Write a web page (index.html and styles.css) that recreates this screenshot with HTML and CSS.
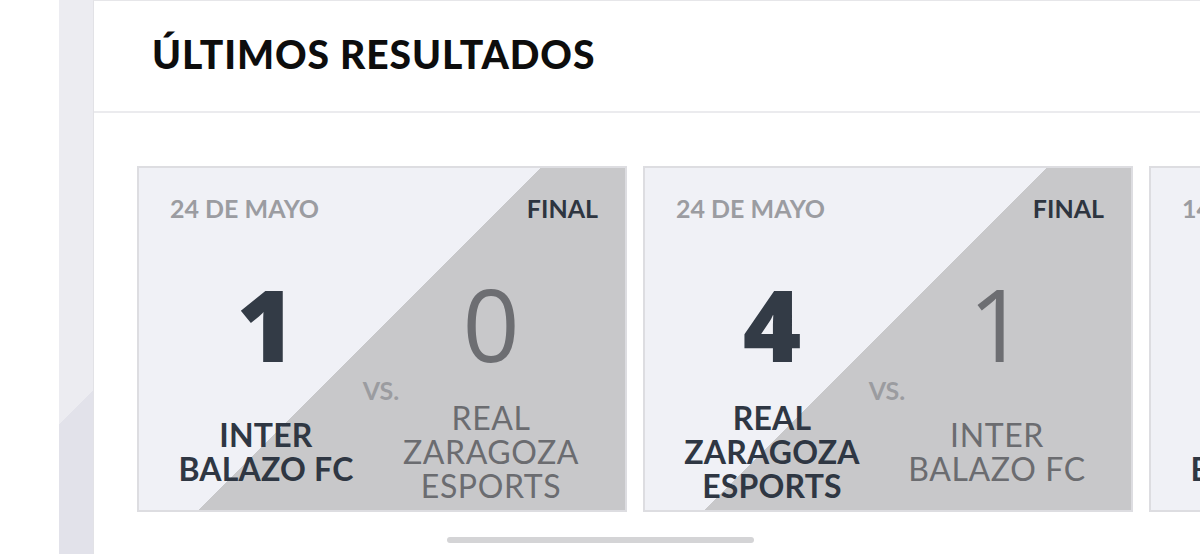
FILE: index.html
```html
<!DOCTYPE html>
<html lang="es">
<head>
<meta charset="utf-8">
<title>Últimos resultados</title>
<link rel="stylesheet" href="styles.css">
</head>
<body>
<div class="page">
  <div class="rail"></div>
  <section class="panel">
    <header class="panel-head">
      <h2 class="panel-title">ÚLTIMOS RESULTADOS</h2>
    </header>
    <div class="results">
      <article class="card">
        <div class="card-top">
          <span class="date">24 DE MAYO</span>
          <span class="status">FINAL</span>
        </div>
        <div class="match">
          <div class="side win">
            <div class="score">1</div>
            <div class="team"><span>INTER<br>BALAZO FC</span></div>
          </div>
          <div class="vs">VS.</div>
          <div class="side lose">
            <div class="score">0</div>
            <div class="team"><span>REAL<br>ZARAGOZA<br>ESPORTS</span></div>
          </div>
        </div>
      </article>
      <article class="card">
        <div class="card-top">
          <span class="date">24 DE MAYO</span>
          <span class="status">FINAL</span>
        </div>
        <div class="match">
          <div class="side win">
            <div class="score">4</div>
            <div class="team"><span>REAL<br>ZARAGOZA<br>ESPORTS</span></div>
          </div>
          <div class="vs">VS.</div>
          <div class="side lose">
            <div class="score">1</div>
            <div class="team"><span>INTER<br>BALAZO FC</span></div>
          </div>
        </div>
      </article>
      <article class="card">
        <div class="card-top">
          <span class="date">14 DE MAYO</span>
          <span class="status">FINAL</span>
        </div>
        <div class="match">
          <div class="side win">
            <div class="score">2</div>
            <div class="team"><span>INTER<br>BALAZO FC</span></div>
          </div>
          <div class="vs">VS.</div>
          <div class="side lose">
            <div class="score">1</div>
            <div class="team"><span>REAL<br>ZARAGOZA<br>ESPORTS</span></div>
          </div>
        </div>
      </article>
    </div>
    <div class="scroll-thumb"></div>
  </section>
</div>
</body>
</html>
```

FILE: styles.css
```css
html, body {
  margin: 0;
  height: 100%;
  background: #fff;
  overflow: hidden;
}

body {
  font-family: Lato, "Open Sans", sans-serif;
}

.page {
  display: flex;
  height: 554px;
}

/* edge of the neighbouring column */
.rail {
  flex: 0 0 34px;
  margin-left: 59px;
  background: linear-gradient(135deg, #ececf1 300px, #e2e2ea 300px);
}

.panel {
  flex: 1;
  min-width: 0;
  overflow: hidden;
  border-left: 1px solid #e2e2e6;
  border-top: 1px solid #e6e6e9;
}

.panel-head {
  height: 112px;
  box-sizing: border-box;
  padding: 30px 0 0 58px;
  border-bottom: 2px solid #ebebee;
}

.panel-title {
  margin: 0;
  font-size: 39px;
  font-weight: 900;
  line-height: 47px;
  color: #0d0d0d;
  letter-spacing: 0.9px;
}

.results {
  display: flex;
  gap: 16px;
  padding: 53px 0 0 43px;
}

/* light half for the home side, grey half for the away side */
.card {
  flex: 0 0 490px;
  height: 346px;
  box-sizing: border-box;
  padding: 25px 27px 0 31px;
  border: 2px solid #dddde1;
  background: linear-gradient(135deg, #f0f1f6 284px, #c8c8ca 284px);
}

.card-top {
  display: flex;
  justify-content: space-between;
  font-size: 25px;
  font-weight: 700;
  line-height: 30px;
}

.date {
  color: #9b9ca1;
}

.status {
  color: #2e3540;
}

.match {
  display: grid;
  grid-template-columns: 192px 38px 182px;
  margin-top: 50px;
}

.score {
  font-family: "Open Sans", "Noto Sans", sans-serif;
  font-size: 100px;
  line-height: 100px;
  text-align: center;
}

.team {
  height: 102px;
  margin-top: 28px;
  display: flex;
  align-items: center;
  justify-content: center;
  text-align: center;
  font-size: 32px;
  line-height: 34px;
  white-space: nowrap;
}

.win .score {
  font-weight: 800;
  color: #333b46;
}

.win .team {
  font-weight: 700;
  color: #2f3743;
  letter-spacing: 0.2px;
}

.lose .score {
  font-weight: 400;
  color: #6d6e72;
}

.lose .team {
  font-weight: 400;
  color: #6b6c70;
  letter-spacing: 0.6px;
}

.vs {
  padding-top: 102px;
  font-size: 25px;
  font-weight: 700;
  line-height: 30px;
  color: #9b9ca0;
  text-align: center;
}

.scroll-thumb {
  width: 307px;
  height: 6px;
  margin: 25px 0 0 353px;
  border-radius: 3px;
  background: #d4d4d6;
}
```
